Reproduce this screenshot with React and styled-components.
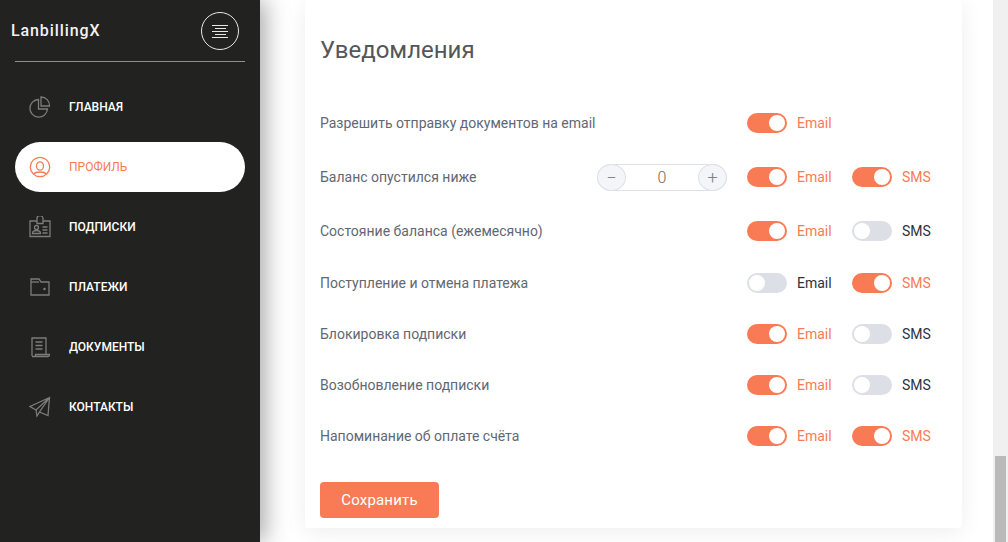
import React from 'react'
import styled, { createGlobalStyle } from 'styled-components'

const GlobalStyle = createGlobalStyle`
  html, body {
    margin: 0;
    padding: 0;
    height: 100%;
    overflow: hidden;
    background: #fff;
    font-family: Roboto, "Liberation Sans", sans-serif;
  }
  * { box-sizing: border-box; }
`

const Page = styled.div`
  display: flex;
  width: 1008px;
  height: 542px;
  overflow: hidden;
`

const Sidebar = styled.aside`
  flex: none;
  width: 260px;
  height: 542px;
  background: #222220;
  box-shadow: 5px 0 22px rgba(0, 0, 0, 0.35);
  padding: 11px 15px 0;
  z-index: 2;
`

const Brand = styled.div`
  display: flex;
  align-items: center;
  justify-content: space-between;
  height: 51px;
  padding: 0 6px 0 0;
  border-bottom: 1px solid #8f8f8d;
`

const BrandName = styled.div`
  margin: -12px 0 0 -4px;
  font-size: 16px;
  font-weight: 500;
  letter-spacing: 0.9px;
  color: #f1f1f1;
`

const MenuButton = styled.div`
  display: flex;
  flex-direction: column;
  align-items: center;
  justify-content: center;
  gap: 2px;
  width: 38px;
  height: 38px;
  margin-top: -10px;
  border: 1px solid #e8e8e8;
  border-radius: 50%;
`

const MenuLine = styled.span`
  display: block;
  height: 1px;
  width: ${(p) => p.$width}px;
  background: #e6e6e6;
`

const Nav = styled.nav`
  display: flex;
  flex-direction: column;
  gap: 10px;
  margin-top: 20px;
`

const NavItem = styled.a`
  display: flex;
  align-items: center;
  gap: 18px;
  height: 50px;
  padding-left: 14px;
  border-radius: 25px;
  background: ${(p) => (p.$active ? '#fff' : 'transparent')};
  color: ${(p) => (p.$active ? '#f97b55' : '#fff')};
  font-size: 12px;
  font-weight: ${(p) => (p.$active ? 400 : 500)};
`

const NavIcon = styled.svg`
  flex: none;
  width: 22px;
  height: 22px;
  fill: none;
  stroke: ${(p) => (p.$active ? '#f97b55' : '#7c7c7a')};
  stroke-width: 1.3;
`

const Main = styled.main`
  flex: none;
  width: 733px;
  padding: 0 0 14px 45px;
`

const Card = styled.section`
  width: 657px;
  height: 528px;
  padding: 36px 15px 0;
  background: #fff;
  border-radius: 4px;
  box-shadow: 0 4px 22px rgba(0, 0, 0, 0.07);
`

const Title = styled.h2`
  margin: 0 0 33px;
  font-size: 24px;
  line-height: 28px;
  font-weight: 400;
  color: #54565a;
`

const Rows = styled.div`
  display: flex;
  flex-direction: column;
`

const Row = styled.div`
  display: flex;
  align-items: center;
  height: 51px;
  margin-bottom: ${(p) => p.$extra || 0}px;
`

const RowLabel = styled.div`
  flex: none;
  width: 277px;
  font-size: 14px;
  color: #5f6873;
`

const StepperSlot = styled.div`
  flex: none;
  width: 150px;
`

const Stepper = styled.div`
  display: flex;
  align-items: center;
  justify-content: space-between;
  width: 130px;
  height: 27px;
  margin-top: 1px;
  border: 1px solid #dde0e8;
  border-radius: 14px;
`

const StepButton = styled.span`
  display: flex;
  align-items: center;
  justify-content: center;
  width: 29px;
  height: 27px;
  margin: -1px;
  border: 1px solid #dde0e8;
  border-radius: 50%;
  background: #f4f5f9;
  color: #7c818a;
  font-size: 18px;
  font-weight: 300;
`

const StepValue = styled.span`
  font-size: 16px;
  font-weight: 300;
  color: #6f6a5c;
`

const Channel = styled.div`
  flex: none;
  display: flex;
  align-items: center;
  gap: 10px;
  width: ${(p) => p.$width}px;
  font-size: 14px;
  color: ${(p) => (p.$on ? '#f97b55' : '#2c3240')};
`

const Track = styled.span`
  position: relative;
  flex: none;
  width: 40px;
  height: 20px;
  border-radius: 10px;
  background: ${(p) => (p.$on ? '#f97b55' : '#dcdfe6')};
`

const Knob = styled.span`
  position: absolute;
  top: 2px;
  left: ${(p) => (p.$on ? '22px' : '2px')};
  width: 16px;
  height: 16px;
  border-radius: 50%;
  background: #fff;
`

const SaveButton = styled.button`
  display: block;
  width: 119px;
  height: 36px;
  margin-top: 21px;
  border: 0;
  border-radius: 4px;
  background: #f97b55;
  color: #fff;
  font-family: inherit;
  font-size: 15px;
  letter-spacing: 0.2px;
`

const ScrollBar = styled.div`
  flex: none;
  position: relative;
  width: 15px;
  height: 542px;
  margin-left: 0;
  background: #f0f0f0;
`

const ScrollThumb = styled.div`
  position: absolute;
  left: 2px;
  right: 2px;
  top: 456px;
  bottom: 0;
  background: #bababa;
`

const navItems = [
  {
    label: 'ГЛАВНАЯ',
    icon: (
      <>
        <path d="M9.500 3.500a8.800 8.800 0 1 0 9 9.500h-9z" />
        <path d="M12 1a8.500 8.500 0 0 1 8.500 9H12z" />
      </>
    ),
  },
  {
    label: 'ПРОФИЛЬ',
    active: true,
    icon: (
      <>
        <circle cx="11" cy="11" r="9.700" />
        <ellipse cx="11" cy="10" rx="3.500" ry="4.200" />
        <path d="M4.500 18c1.500-1.600 3.500-2 6.500-2s5 .4 6.500 2" />
      </>
    ),
  },
  {
    label: 'ПОДПИСКИ',
    icon: (
      <>
        <path d="M8 5H1v15.500h20V5h-7" />
        <path d="M8 7.500V2.500a3 3 0 0 1 6 0v5z" />
        <circle cx="7.500" cy="11.500" r="2" />
        <path d="M3.500 17.500c0-2.500 1.500-3 4-3s4 .5 4 3zM13.500 11h5M13.500 14h5M13.500 17h5" />
      </>
    ),
  },
  {
    label: 'ПЛАТЕЖИ',
    icon: (
      <>
        <path d="M2 19V3h8l2 3h8v13z" />
        <path d="M10 6H2" />
        <circle cx="15.500" cy="13" r="0.600" />
      </>
    ),
  },
  {
    label: 'ДОКУМЕНТЫ',
    icon: (
      <>
        <path d="M3 20V2h14v17" />
        <path d="M3 20.500h16c1 0 1.500-.6 1.500-2H6.500v2" />
        <path d="M6.500 6h7M6.500 9.500h7M6.500 13h7" />
      </>
    ),
  },
  {
    label: 'КОНТАКТЫ',
    icon: (
      <>
        <path d="M20.500 1.500L1 10.500l6 3.500 13.500-12.500-10 14.500 8.500 3.500z" />
        <path d="M7 14l1 6 2.500-4" />
      </>
    ),
  },
]

const settings = [
  { label: 'Разрешить отправку документов на email', email: true, extra: 3 },
  { label: 'Баланс опустился ниже', email: true, sms: true, stepper: true, extra: 3 },
  { label: 'Состояние баланса (ежемесячно)', email: true, sms: false, extra: 1 },
  { label: 'Поступление и отмена платежа', email: false, sms: true },
  { label: 'Блокировка подписки', email: true, sms: false },
  { label: 'Возобновление подписки', email: true, sms: false },
  { label: 'Напоминание об оплате счёта', email: true, sms: true },
]

const menuLines = [16, 11, 16, 11, 16]

function Toggle({ on, label, width }) {
  return (
    <Channel $on={on} $width={width}>
      <Track $on={on}>
        <Knob $on={on} />
      </Track>
      {label}
    </Channel>
  )
}

export default function App() {
  return (
    <Page>
      <GlobalStyle />
      <Sidebar>
        <Brand>
          <BrandName>LanbillingX</BrandName>
          <MenuButton>
            {menuLines.map((width, i) => (
              <MenuLine key={i} $width={width} />
            ))}
          </MenuButton>
        </Brand>
        <Nav>
          {navItems.map((item) => (
            <NavItem key={item.label} $active={item.active}>
              <NavIcon viewBox="0 0 22 22" $active={item.active}>
                {item.icon}
              </NavIcon>
              {item.label}
            </NavItem>
          ))}
        </Nav>
      </Sidebar>
      <Main>
        <Card>
          <Title>Уведомления</Title>
          <Rows>
            {settings.map((row) => (
              <Row key={row.label} $extra={row.extra}>
                <RowLabel>{row.label}</RowLabel>
                <StepperSlot>
                  {row.stepper && (
                    <Stepper>
                      <StepButton>−</StepButton>
                      <StepValue>0</StepValue>
                      <StepButton>+</StepButton>
                    </Stepper>
                  )}
                </StepperSlot>
                <Toggle on={row.email} label="Email" width={105} />
                {row.sms !== undefined && <Toggle on={row.sms} label="SMS" width={90} />}
              </Row>
            ))}
          </Rows>
          <SaveButton>Сохранить</SaveButton>
        </Card>
      </Main>
      <ScrollBar>
        <ScrollThumb />
      </ScrollBar>
    </Page>
  )
}
